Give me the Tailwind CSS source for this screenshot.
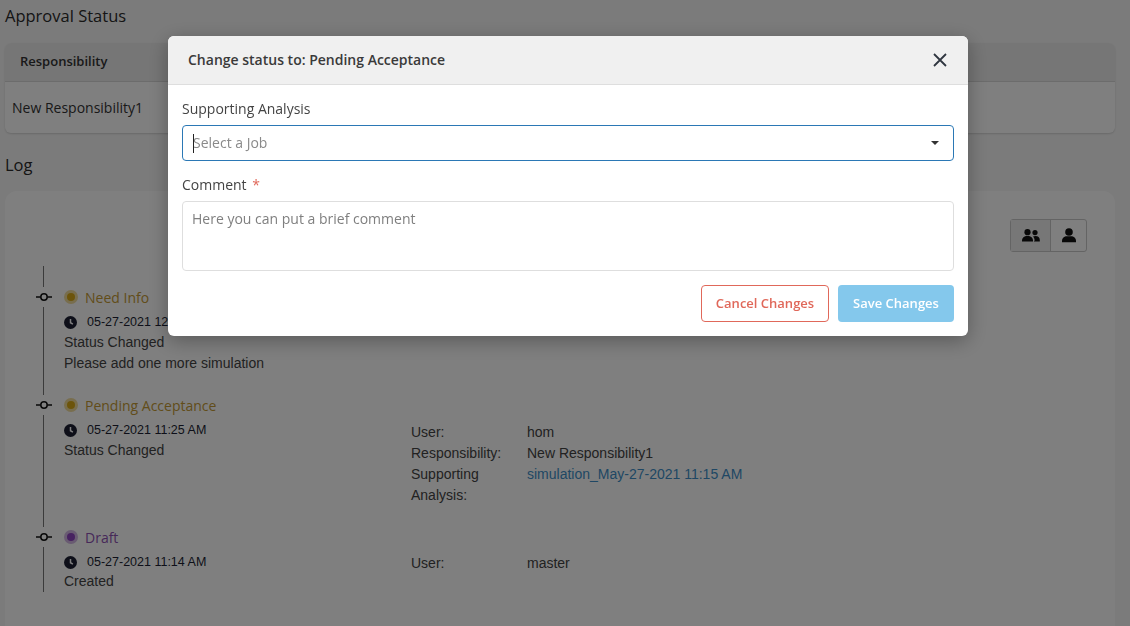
<!DOCTYPE html>
<html lang="en">
<head>
  <meta charset="UTF-8" />
  <title>Approval Status</title>
  <script src="https://cdn.jsdelivr.net/npm/@tailwindcss/browser@4"></script>
</head>
<body class="h-[626px] overflow-hidden bg-[#f7f7f7] font-['Open_Sans',sans-serif] text-[#212529]">

  <!-- Page behind the dialog -->
  <div class="pl-[5px] pr-[15px]">
    <h2 class="h-[43px] pt-[5px] text-[16.5px] leading-[22px] font-medium text-[#2a2a2a]">Approval Status</h2>

    <div class="h-[90px] rounded-md bg-white shadow-[0_1px_2px_rgba(0,0,0,0.15)] overflow-hidden">
      <div class="h-[39px] pl-[15px] bg-[#ececec] border-b border-[#d8d8d8] text-[13px] leading-[37px] font-semibold text-[#333]">Responsibility</div>
      <div class="pl-[7px] pt-[16px] text-[14px] leading-[20px] text-[#333]">New Responsibility1</div>
    </div>

    <h2 class="h-[58px] pt-[21px] text-[16.5px] leading-[22px] font-medium text-[#2a2a2a]">Log</h2>

    <div class="h-[435px] overflow-hidden rounded-t-xl bg-white pt-[28px]">
      <div class="flex justify-end pr-[28px]">
        <div class="flex h-[33px] rounded-[3px] border border-[#c8c8c8] text-[#111]">
          <div class="w-[40px] flex items-center justify-center bg-[#eeeeee] border-r border-[#c8c8c8]">
            <svg width="18" height="13" viewBox="0 0 18 13" fill="currentColor"><circle cx="5.500" cy="3.200" r="3.100"/><circle cx="13" cy="3.600" r="2.600"/><path d="M0 12c0-3.200 2-5 5.500-5s5.500 1.800 5.500 5v.5H0z"/><path d="M11.800 12.500h6V11c0-2.500-1.700-4-4.300-4-1 0-1.800.2-2.500.6 1 .9 1.600 2.200 1.600 3.900z"/></svg>
          </div>
          <div class="w-[35px] flex items-center justify-center">
            <svg width="14" height="15" viewBox="0 0 14 15" fill="currentColor"><circle cx="7" cy="4" r="3.800"/><path d="M0 13c0-3 2.200-4.800 5-4.800h4c2.800 0 5 1.800 5 4.800v1.200H0z"/></svg>
          </div>
        </div>
      </div>

      <!-- Timeline -->
      <div class="relative mt-[14px] pl-[59px] text-[14px] leading-[21px] font-['Liberation_Sans',sans-serif] text-[#444]">
        <div class="absolute left-[38px] top-0 h-[326px] w-px bg-[#777]"></div>

        <div class="h-[108px] pt-[21px]">
          <div class="relative flex items-center h-[20px] gap-[7px] font-['Open_Sans',sans-serif] text-[#c49a35]">
            <span class="absolute left-[-30px] top-0 h-[20px] w-[20px] flex items-center justify-center bg-white">
              <svg width="16" height="10" viewBox="0 0 16 10" fill="none" stroke="#111" stroke-width="1.500"><circle cx="8" cy="5" r="3.200"/><path d="M0 5h4.800M11.200 5H16"/></svg>
            </span>
            <span class="h-[14px] w-[14px] rounded-full bg-[#e3b93a]/50 flex items-center justify-center"><span class="h-[8px] w-[8px] rounded-full bg-[#d9a916]"></span></span>
            <span>Need Info</span>
          </div>
          <div class="flex items-center gap-[10px] mt-[5px] h-[20px] text-[12.5px] text-[#1c1f33]">
            <svg width="13" height="13" viewBox="0 0 13 13"><circle cx="6.500" cy="6.500" r="6.500" fill="#1c1f33"/><path d="M6.500 3v3.700l2.400 1.400" fill="none" stroke="#fff" stroke-width="1.500"/></svg>
            <span>05-27-2021 12:10 PM</span>
          </div>
          <div>Status Changed</div>
          <div>Please add one more simulation</div>
        </div>

        <div class="h-[132px] pt-[21px] relative">
          <div class="relative flex items-center h-[20px] gap-[7px] font-['Open_Sans',sans-serif] text-[#c49a35]">
            <span class="absolute left-[-30px] top-0 h-[20px] w-[20px] flex items-center justify-center bg-white">
              <svg width="16" height="10" viewBox="0 0 16 10" fill="none" stroke="#111" stroke-width="1.500"><circle cx="8" cy="5" r="3.200"/><path d="M0 5h4.800M11.200 5H16"/></svg>
            </span>
            <span class="h-[14px] w-[14px] rounded-full bg-[#e3b93a]/50 flex items-center justify-center"><span class="h-[8px] w-[8px] rounded-full bg-[#d9a916]"></span></span>
            <span>Pending Acceptance</span>
          </div>
          <div class="flex items-center gap-[10px] mt-[5px] h-[20px] text-[12.5px] text-[#1c1f33]">
            <svg width="13" height="13" viewBox="0 0 13 13"><circle cx="6.500" cy="6.500" r="6.500" fill="#1c1f33"/><path d="M6.500 3v3.700l2.400 1.400" fill="none" stroke="#fff" stroke-width="1.500"/></svg>
            <span>05-27-2021 11:25 AM</span>
          </div>
          <div>Status Changed</div>
          <div class="absolute left-[347px] top-[48px] grid grid-cols-[116px_1fr]">
            <span>User:</span><span>hom</span>
            <span>Responsibility:</span><span>New Responsibility1</span>
            <span class="w-[90px]">Supporting Analysis:</span><span class="text-[#3f8fc8]">simulation_May-27-2021 11:15 AM</span>
          </div>
        </div>

        <div class="pt-[21px] relative">
          <div class="relative flex items-center h-[20px] gap-[7px] font-['Open_Sans',sans-serif] text-[#8e52b3]">
            <span class="absolute left-[-30px] top-0 h-[20px] w-[20px] flex items-center justify-center bg-white">
              <svg width="16" height="10" viewBox="0 0 16 10" fill="none" stroke="#111" stroke-width="1.500"><circle cx="8" cy="5" r="3.200"/><path d="M0 5h4.800M11.200 5H16"/></svg>
            </span>
            <span class="h-[14px] w-[14px] rounded-full bg-[#a56fc9]/50 flex items-center justify-center"><span class="h-[8px] w-[8px] rounded-full bg-[#8e44c0]"></span></span>
            <span>Draft</span>
          </div>
          <div class="flex items-center gap-[10px] mt-[5px] -mb-px h-[20px] text-[12.5px] text-[#1c1f33]">
            <svg width="13" height="13" viewBox="0 0 13 13"><circle cx="6.500" cy="6.500" r="6.500" fill="#1c1f33"/><path d="M6.500 3v3.700l2.400 1.400" fill="none" stroke="#fff" stroke-width="1.500"/></svg>
            <span>05-27-2021 11:14 AM</span>
          </div>
          <div>Created</div>
          <div class="absolute left-[347px] top-[47px] grid grid-cols-[116px_1fr]">
            <span>User:</span><span>master</span>
          </div>
        </div>
      </div>
    </div>
  </div>

  <!-- Backdrop -->
  <div class="fixed inset-0 bg-black/50"></div>

  <!-- Dialog -->
  <div class="fixed left-[168px] top-[36px] w-[800px] h-[300px] rounded-md bg-white shadow-[0_5px_20px_rgba(0,0,0,0.3)] overflow-hidden">
    <div class="h-[49px] flex items-center justify-between pl-[20px] pr-[21px] pb-px bg-[#f0f0f0] border-b border-[#dedede]">
      <span class="text-[14px] font-semibold text-[#3a3a3a]">Change status to: Pending Acceptance</span>
      <svg width="14" height="14" viewBox="0 0 14 14" fill="none" stroke="#2f3640" stroke-width="1.800"><path d="M1 1l12 12M13 1L1 13"/></svg>
    </div>
    <div class="px-[14px] pt-[14px]">
      <div class="h-[26px] text-[14px] leading-[20px] text-[#444]">Supporting Analysis</div>
      <div class="relative h-[36px] flex items-center justify-between pl-[10px] pr-[14px] pb-px rounded-[4px] border border-[#2b78b5] text-[14px] text-[#8a8a8a]">
        <span class="absolute left-[10px] top-[8px] h-[19px] w-px bg-[#222]"></span>
        <span>Select a Job</span>
        <span class="h-0 w-0 border-x-[4px] border-t-[4px] border-x-transparent border-t-[#333]"></span>
      </div>
      <div class="mt-[14px] h-[26px] text-[14px] leading-[20px] text-[#444]">Comment <span class="ml-[2px] text-[#e0685a]">*</span></div>
      <div class="h-[70px] rounded-[4px] border border-[#dedede] px-[9px] pt-[7px] text-[14px] leading-[20px] text-[#7f7f7f]">Here you can put a brief comment</div>
      <div class="mt-[14px] flex justify-end gap-[9px]">
        <div class="w-[128px] h-[37px] flex items-center justify-center rounded-[4px] border border-[#e0685a] text-[13px] font-semibold text-[#e0685a]">Cancel Changes</div>
        <div class="w-[116px] h-[37px] flex items-center justify-center rounded-[4px] bg-[#84c8ec] text-[13px] font-semibold text-white">Save Changes</div>
      </div>
    </div>
  </div>
</body>
</html>
